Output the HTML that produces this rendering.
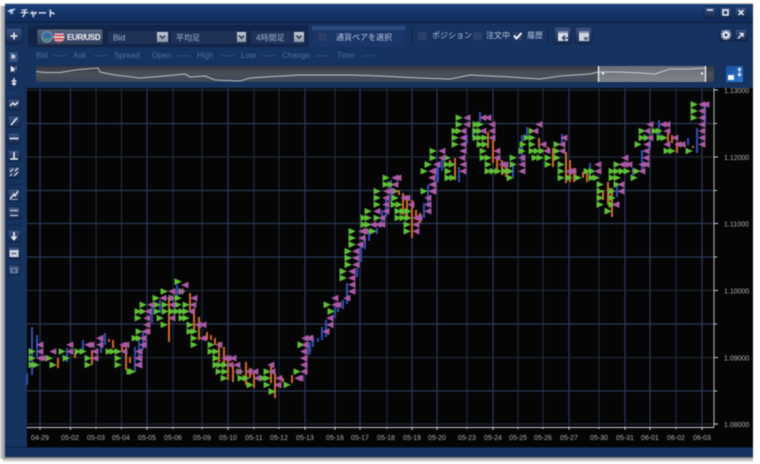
<!DOCTYPE html>
<html><head><meta charset="utf-8"><title>チャート</title>
<style>
html,body{margin:0;padding:0;background:#fff;width:760px;height:464px;overflow:hidden}
svg{display:block;filter:blur(.45px)}
text{font-family:"Liberation Sans","Noto Sans CJK JP",sans-serif}
.g{marker-start:url(#mg);marker-mid:url(#mg);marker-end:url(#mg);fill:none;stroke:none}
.p{marker-start:url(#mp);marker-mid:url(#mp);marker-end:url(#mp);fill:none;stroke:none}
.d text{font-size:7px;fill:#b0b0b0;text-anchor:middle}
.i text{font-size:8px;fill:#4a70a6}
.y text{font-size:7px;fill:#b0b0b0}
.b{fill:url(#btn);stroke:#0b1a38;stroke-width:.6}
.w{fill:none;stroke:#f0f2f6;stroke-width:1.5}
</style></head><body>
<svg width="760" height="464" viewBox="0 0 760 464" xmlns="http://www.w3.org/2000/svg">
<defs>
<linearGradient id="ttl" x1="0" y1="0" x2="0" y2="1"><stop offset="0" stop-color="#1b3f78"/><stop offset="1" stop-color="#0f2a58"/></linearGradient>
<linearGradient id="btn" x1="0" y1="0" x2="0" y2="1"><stop offset="0" stop-color="#3b5484"/><stop offset="1" stop-color="#16294f"/></linearGradient>
<linearGradient id="pair" x1="0" y1="0" x2="0" y2="1"><stop offset="0" stop-color="#5a6a86"/><stop offset="1" stop-color="#2e3c58"/></linearGradient>
<linearGradient id="nav" x1="0" y1="0" x2="0" y2="1"><stop offset="0" stop-color="#33373f"/><stop offset=".5" stop-color="#4b5058"/><stop offset="1" stop-color="#3a4656"/></linearGradient>
<linearGradient id="sel" x1="0" y1="0" x2="0" y2="1"><stop offset="0" stop-color="#6a6f76"/><stop offset="1" stop-color="#80858d"/></linearGradient>
<linearGradient id="blu" x1="0" y1="0" x2="1" y2="1"><stop offset="0" stop-color="#1a4f9c"/><stop offset="1" stop-color="#2a78d0"/></linearGradient>
<linearGradient id="ar" x1="0" y1="0" x2="0" y2="1"><stop offset="0" stop-color="#c4ccd6"/><stop offset="1" stop-color="#8e98a8"/></linearGradient>
<linearGradient id="lft" x1="0" y1="0" x2="1" y2="0"><stop offset="0" stop-color="#d8d8d8"/><stop offset="1" stop-color="#8f8f8f"/></linearGradient>
<linearGradient id="bot" x1="0" y1="0" x2="0" y2="1"><stop offset="0" stop-color="#8a8a8a"/><stop offset="1" stop-color="#f0f0f0"/></linearGradient>
<clipPath id="fc"><circle cx="59" cy="37" r="5.5"/></clipPath>
<marker id="mg" markerUnits="userSpaceOnUse" markerWidth="10" markerHeight="8" refX="3.4" refY="3" overflow="visible"><path d="M0 -.3L7.2 3 0 6.3z" fill="#5fc038"/></marker>
<marker id="mp" markerUnits="userSpaceOnUse" markerWidth="10" markerHeight="8" refX="3.8" refY="3" overflow="visible"><path d="M7.2 -.3L0 3 7.2 6.3z" fill="#ac5aa6"/></marker>
</defs>

<rect width="760" height="464" fill="#fff"/>
<rect x="0" y="6" width="5" height="453" fill="url(#lft)"/>
<rect x="3" y="457" width="750" height="5" fill="url(#bot)"/>
<rect x="5" y="3" width="748" height="1" fill="#ccc"/>

<!-- window -->
<rect x="5" y="4" width="748" height="453" fill="#16325f"/>
<rect x="5" y="4" width="748" height="19" fill="url(#ttl)"/>
<rect x="5" y="22" width="748" height="1" fill="#0b1d40"/>
<rect x="5" y="447" width="748" height="1" fill="#0c2048"/>
<rect x="5" y="457" width="748" height=".8" fill="#777"/>

<!-- title -->
<path d="M7 11.5q4-3.500 9-2.500l-3.500 2.500 1 3-2-1.500-1 2-.5-3z" fill="#b8d0e8"/>
<text x="20" y="16.500" font-size="9" font-weight="bold" fill="#eef2f8">チャート</text>

<!-- window buttons -->
<g class="b"><rect x="704" y="7" width="12" height="11"/><rect x="720" y="7" width="11.500" height="11"/><rect x="735" y="7" width="12" height="11"/></g>
<path d="M707 10h6" class="w"/>
<rect x="723" y="10" width="5" height="5" class="w"/>
<path d="M738.500 10l5 5m0-5l-5 5" class="w"/>

<!-- toolbar -->
<rect x="6" y="28" width="16" height="16" class="b"/>
<path d="M14 32.500v7M10.500 36h7" class="w"/>
<rect x="28" y="25" width="280" height="22" fill="#11244a"/>
<rect x="37" y="29" width="66" height="16" rx="2" fill="url(#pair)" stroke="#1a2740"/>
<circle cx="47" cy="37" r="5.300" fill="#3c6aa0" stroke="#9ab0c4" stroke-width=".7"/>
<path d="M42.500 38h9l-1 3h-7z" fill="#4f8a7e"/>
<g clip-path="url(#fc)"><rect x="53" y="31" width="12" height="12" fill="#e8e8e8"/><path d="M53 32.200h12M53 35.500h12M53 38.800h12M53 41.500h12" stroke="#c83038" stroke-width="1.500"/><rect x="53" y="31" width="12" height="2.600" fill="#2b3f80" opacity=".7"/></g>
<text x="67" y="40" font-size="8" font-weight="bold" letter-spacing="-.4" fill="#f2f4f8">EUR/USD</text>

<rect x="108" y="31" width="61" height="13" fill="#1f3157"/>
<text x="113" y="40.500" font-size="8.500" fill="#9fb2cc">Bid</text>
<rect x="157" y="32" width="11" height="10" fill="url(#ar)"/><path d="M159.800 35.500l2.700 2.700 2.700-2.700" fill="none" stroke="#1f3157" stroke-width="1.400"/>
<rect x="171" y="31" width="76" height="13" fill="#1f3157"/>
<text x="176" y="40.500" font-size="8" fill="#9fb2cc">平均足</text>
<rect x="237" y="32" width="9" height="10" fill="url(#ar)"/><path d="M239 35.500l2.500 2.700 2.500-2.700" fill="none" stroke="#1f3157" stroke-width="1.400"/>
<rect x="251" y="31" width="54" height="13" fill="#1f3157"/>
<text x="256" y="40.500" font-size="8" fill="#9fb2cc">4時間足</text>
<rect x="294" y="32" width="10" height="10" fill="url(#ar)"/><path d="M296.500 35.500l2.500 2.700 2.500-2.700" fill="none" stroke="#1f3157" stroke-width="1.400"/>

<rect x="312" y="25" width="93" height="22" fill="#1a3568"/>
<rect x="312" y="26" width="93" height="4" fill="#2c4c80"/>
<rect x="318" y="33" width="9" height="8" fill="#2a4066" stroke="#22365a"/>
<text x="336" y="40" font-size="8" fill="#b8c6da">通貨ペアを選択</text>
<path d="M412 27v18" stroke="#0f2348"/>

<rect x="418" y="32" width="9" height="8" fill="#2a4066"/>
<text x="432" y="38" font-size="8" fill="#b8c6da">ポジション</text>
<rect x="473" y="32" width="9" height="8" fill="#2a4066"/>
<text x="486" y="38" font-size="8" fill="#b8c6da">注文中</text>
<rect x="513" y="32" width="9" height="8" fill="#2a4066"/>
<path d="M514 35.500l2.500 3 5-5.500" fill="none" stroke="#fff" stroke-width="1.800"/>
<text x="527" y="38" font-size="8" fill="#b8c6da">履歴</text>
<path d="M548 27v18" stroke="#0f2348"/>

<rect x="554" y="27" width="17" height="17" rx="2" class="b"/>
<rect x="558" y="31" width="10" height="10" fill="#d8dde6"/><rect x="558" y="31" width="10" height="2" fill="#7d8ea8"/><path d="M568 38h-5m2-2.500l-2.500 2.500 2.500 2.500" fill="none" stroke="#1f3a68" stroke-width="1.300"/>
<rect x="575" y="27" width="17" height="17" rx="2" class="b"/>
<rect x="579" y="31" width="10" height="10" fill="#d0d6e0"/><rect x="579" y="31" width="10" height="2" fill="#7d8ea8"/><rect x="584" y="37" width="4" height="3" fill="#5a6a86"/>

<rect x="720" y="29" width="12" height="12" class="b"/>
<circle cx="726" cy="35" r="2.500" fill="none" stroke="#f0f2f6" stroke-width="2"/><circle cx="726" cy="35" r="4.300" fill="none" stroke="#f0f2f6" stroke-width="1.200" stroke-dasharray="1.500 1.200"/>
<rect x="735" y="29" width="12" height="12" class="b"/>
<path d="M738 38.500l5-5m-3.500 0h3.500v3.500" fill="none" stroke="#f0f2f6" stroke-width="1.300"/>

<!-- info row -->
<g class="i"><text x="36" y="58">Bid</text><text x="53" y="58">-----</text><text x="73" y="58">Ask</text><text x="94" y="58">-----</text><text x="114" y="58">Spread</text><text x="152" y="58">Open</text><text x="177" y="58">-----</text><text x="197" y="58">High</text><text x="221" y="58">-----</text><text x="241" y="58">Low</text><text x="262" y="58">-----</text><text x="282" y="58">Change</text><text x="315" y="58">-----</text><text x="337" y="58">Time</text><text x="362" y="58">--:--</text></g>

<!-- navigator -->
<rect x="36" y="66" width="678" height="16" rx="2" fill="url(#nav)"/>
<rect x="598" y="66" width="108" height="16" fill="url(#sel)"/>
<path d="M598.500 66v16M705.500 66v16" stroke="#fff" stroke-width="1.200"/>
<path d="M36 71.500L45 72.500 60 72.500 75 70 85 69 98 68 100 72 115 75 140 78 165 76 185 74 190 77 205 76 215 80 240 81 250 78 265 77 300 75 350 75 380 76 420 78 450 79 470 75 510 77 540 79 560 76 590 74 598 72 620 72 640 73 655 74 670 69 690 69 705 68" fill="none" stroke="#dfe3e8" stroke-width=".8"/>
<rect x="602" y="72.500" width="2" height="2" fill="#fff"/><rect x="701" y="72.500" width="2" height="2" fill="#fff"/>
<rect x="726" y="66" width="17" height="16" rx="1" fill="url(#blu)"/>
<rect x="728" y="75" width="6" height="5" fill="#f0f4f8"/><path d="M739.500 68v8M737.800 70l1.700-2 1.700 2M737.800 74l1.700 2 1.700-2" fill="none" stroke="#f0f4f8" stroke-width="1"/>

<!-- left toolbar -->
<rect x="9" y="52" width="9" height="10" fill="#34507e"/><path d="M11.500 53.500v6l2-1.500 2.500 1-1.500-2 1.500-1z" fill="#c8d0dc"/>
<rect x="9" y="64.500" width="10" height="10" fill="#1a2f5a"/><path d="M11 66v6l1.500-1.500 2 1.500-1-2.500 1.500-.5zM16 66v4" fill="#eef" stroke="#eef" stroke-width=".5"/>
<rect x="9" y="77" width="10" height="10" fill="#1a2f5a"/><path d="M14 78v7M12 83l2 2 2-2M11.500 81h5" fill="none" stroke="#f0f2f6" stroke-width="1.300"/>
<path d="M8 93h12" stroke="#24406e"/>
<g class="b"><rect x="8" y="99" width="12" height="11"/><rect x="8" y="116" width="12" height="11"/><rect x="8" y="133" width="12" height="11"/><rect x="8" y="150" width="12" height="11"/><rect x="8" y="167" width="12" height="11"/><rect x="8" y="189" width="12" height="12"/><rect x="8" y="207" width="12" height="12"/><rect x="8" y="230" width="12" height="12"/><rect x="8" y="247" width="12" height="12"/><rect x="8" y="265" width="12" height="10" style="opacity:.7"/></g>
<path d="M10 106l3-3 2 2 3-3" class="w"/>
<path d="M11 125l6-7" class="w"/>
<path d="M9.500 138.500h9" class="w"/>
<path d="M14 152v7M10 159h8" class="w"/>
<path d="M10 172l3-3M14 176l4-4M15 171l3-3M10 176l2-2" fill="none" stroke="#f0f2f6" stroke-width="1.100"/>
<path d="M10 199l4-5 1 2 3-5" fill="none" stroke="#dfe3ea" stroke-width="1.500"/><path d="M10 199.500h8" stroke="#aab" />
<path d="M10 210.500h8M10 215.500h8" stroke="#c8ccd4" stroke-width="1.300"/>
<path d="M14 232v7M11.500 236.500l2.500 3 2.500-3" fill="none" stroke="#f0f2f6" stroke-width="1.600"/>
<rect x="9.500" y="250" width="9" height="7" fill="#cfd4dc"/><path d="M11.500 253.500h5" stroke="#44506a" stroke-width="1.200"/>
<rect x="10" y="267.500" width="8" height="6" fill="#64779c"/><circle cx="14" cy="270.500" r="1.500" fill="#2a3f66"/>
<path d="M7 184.500h14M7 225h14" stroke="#0e2146"/>

<!-- chart -->
<rect x="27" y="88" width="726" height="359" fill="#050505"/>
<g stroke-width="1.200" fill="none">
<path d="M40 88V427M70.500 88V427M147 88V427M228 88V427M305 88V427M360 88V427M412 88V427M437 88V427M493 88V427M569 88V427M625 88V427M650 88V427M702 88V427" stroke="#2a3a5a"/>
<path d="M96 88V427M121.500 88V427M173 88V427M202 88V427M254 88V427M279 88V427M335 88V427M387 88V427M467 88V427M518 88V427M543 88V427M599 88V427M676 88V427" stroke="#1f293f"/>
<path d="M27 123.500H714M27 223.500H714M27 257H714M27 324H714M27 391H714M27 190.500H714" stroke="#2a3a5a"/>
<path d="M27 90H714M27 157H714M27 290.500H714M27 357.500H714M27 424H714" stroke="#20283c"/>
</g>
<path d="M714 88V427" stroke="#b8b8b8" stroke-width="1"/>
<path d="M27 427.500H714" stroke="#ccc" stroke-width="1"/>
<path d="M714 90h4M714 123.500h3M714 157h4M714 190.500h3M714 223.500h4M714 257h3M714 290.500h4M714 324h3M714 357.500h4M714 391h3M714 424h4" stroke="#ccc" fill="none"/>
<path d="M40 427v3M70.500 427v3M96 427v2M121.500 427v2M147 427v3M173 427v2M202 427v2M228 427v3M254 427v2M279 427v2M305 427v3M335 427v3M360 427v3M387 427v2M412 427v3M437 427v3M467 427v2M493 427v3M518 427v2M543 427v2M569 427v3M599 427v2M625 427v3M650 427v3M676 427v2M702 427v3" stroke="#ccc" fill="none"/>

<g class="y"><text x="724" y="93">1.13000</text><text x="724" y="160">1.12000</text><text x="724" y="226.500">1.11000</text><text x="724" y="293.500">1.10000</text><text x="724" y="360.500">1.09000</text><text x="724" y="427">1.08000</text></g>
<g class="d"><text x="40" y="440">04-29</text><text x="70" y="440">05-02</text><text x="96" y="440">05-03</text><text x="121" y="440">05-04</text><text x="147" y="440">05-05</text><text x="173" y="440">05-06</text><text x="202" y="440">05-09</text><text x="228" y="440">05-10</text><text x="254" y="440">05-11</text><text x="279" y="440">05-12</text><text x="305" y="440">05-13</text><text x="335" y="440">05-16</text><text x="360" y="440">05-17</text><text x="386" y="440">05-18</text><text x="412" y="440">05-19</text><text x="437" y="440">05-20</text><text x="467" y="440">05-23</text><text x="493" y="440">05-24</text><text x="518" y="440">05-25</text><text x="543" y="440">05-26</text><text x="569" y="440">05-27</text><text x="599" y="440">05-30</text><text x="625" y="440">05-31</text><text x="650" y="440">06-01</text><text x="676" y="440">06-02</text><text x="702" y="440">06-03</text></g>

<!-- blue bars -->
<path fill="none" stroke="#2f50b4" stroke-width="2" d="M27 373V385M32 327V375M37 335V357M67 348V362M83 340V353M101 337V353M105 333V345M135 347V372M139 340V360M143 332V350M152 307V323M160 300V313M177 285V300M310 342V353M318 338V342M309 345V355M313 337V347M322 327V340M326 320V337M335 307V318M338 308V312M343 300V309M347 283V304M357 268V277M361 247V262M365 238V249M369 232V241M377 228V234M382 210V225M386 197V217M391 180V203M424 203V218M428 185V207M437 168V182M442 158V171M438 165V182M459 167V182M467 135V144M473 128V138M480 112V122M513 162V177M522 135V162M527 127V138M562 134V144M590 163V175M617 185V197M633 168V175M642 150V172M650 130V150M659 120V140M688 138V145M697 128V153M705 105V122"/>
<!-- orange bars -->
<path fill="none" stroke="#d2682a" stroke-width="2" d="M58 358V368M75 353V358M92 350V365M109 339V342M113 340V348M122 346V352M126 348V370M130 357V363M169 297V342M190 293V310M194 308V333M199 317V340M207 332V340M211 335V340M215 338V345M219 342V362M224 347V363M228 358V380M233 365V382M246 362V385M250 368V378M254 370V388M271 365V383M275 373V398M283 378V382M292 375V383M399 190V195M403 193V215M407 198V220M412 200V238M416 210V220M420 213V223M450 160V163M455 158V180M488 132V148M493 140V163M497 158V173M502 160V175M506 165V177M539 138V148M548 147V153M553 148V167M566 152V183M570 160V182M574 168V182M583 172V178M587 173V182M603 190V200M608 182V205M612 188V217M633 170V172M668 133V142M672 135V143M677 142V153M685 145V147M693 146V148"/>

<!-- green markers -->
<path class="g" d="M32 351.500H62H78H83H109H113H118M32 358.200H49H66H88H118M32 364.900H36H53H88H118M130 371.600H132M178 281.700H178M164 291.400H182M156 298.100H172H178M143 304.800H157H165H178H186M138 311.400H143H157H165H172H177H182H186M138 318.100H160H182H186M164 324.800H190M139 331.500H190H194M135 338.200H139H194M194 344.800H211M211 351.500H216M216 358.200H216M216 364.900H220H225M219 371.600H225H240H267H297M224 378.200H241H246H263H267M250 384.900H267H287M272 391.600H272M301 344.800H301"/>
<path class="g" d="M428 164.500H428M424 171.200H448M386 177.800H448M386 184.500H391M377 191.200H395H424M377 197.900H395M377 204.600H394H399M368 211.200H398H403H408M364 217.900H368H377H398H403H408M364 224.600H368H407M352 231.300H368H373H407M352 238H352M352 244.600H352M348 251.300H348M348 258H348M348 264.700H348M343 271.400H343M343 278H343M327 304.800H327M331 311.400H331"/>
<path class="g" d="M694 104.400H694M694 111H694M459 117.700H694M459 124.400H476H480M455 131H459H476H480H532H642H655H659M455 137.800H476H480H485H527H532H642H647H660H664M455 144.400H480H485H523H532H557H638M433 151H483H522H532H537H542H557H667H672H689M433 157.800H447H483H488H513H535H540H548H557M447 164.500H452H488H513H548H561H617M448 171.200H488H493H498H505H510H561H587H592H612H617H622H627H637M448 177.800H453H510H561H569H578H592H596H612H617H634M600 184.500H617M600 191.200H612M600 197.900H612M600 204.600H612M608 211.200H608"/>

<!-- purple markers -->
<path class="p" d="M100 338.200H100M40 344.800H70H88H91H100H123H126H143M40 351.500H53H70H95H124M40 358.200H43H95H138M138 364.900H138M185 285H185M172 291.400H180M163 298.100H170H194M151 304.800H172H193M148 311.400H191M147 318.100H172M147 324.800H198H203M145 331.500H147M143 338.200H203M143 344.800H219M139 351.500H139M139 358.200H225H228H233M139 364.900H230H237H271M238 371.600H249H255H272M257 378.200H279H298H300M278 384.900H278M305 338.200H310M305 344.800H305M304 351.500H304M304 358.200H304M304 364.900H304M304 371.600H304"/>
<path class="p" d="M437 164.500H437M433 171.200H433M395 177.800H398M395 184.500H433M387 191.200H391H433M386 197.900H404H407H428M386 204.600H411H428M377 211.200H386H428M382 217.900H416H419M373 224.600H378H382H416M362 231.300H365H416M362 238H362M360 244.600H360M356 251.300H356M356 258H356M356 264.700H356M352 271.400H352M352 278H352M352 284.700H352M352 291.400H352M335 298.100H347M335 304.800H338M330 318.100H330M330 324.800H330M326 331.500H326M305 338.200H309M305 344.800H305"/>
<path class="p" d="M702 104.400H706M702 111H702M467 117.700H483H488H702M467 124.400H492H539H650H663H667H702M463 131H483H492H535H647H667H702M463 137.800H492H564H650H675H702M463 144.400H543H562H647H667H678H682H702M442 151H463H497H547H562H646M442 157.800H462H497H522H625H646M437 164.500H463H502H505H522H598H622H625H629H642H646M432 171.200H463H522H569H573H598H642M432 177.800H432M432 184.500H621M432 191.200H621M616 204.600H616"/>
</svg>
</body></html>
